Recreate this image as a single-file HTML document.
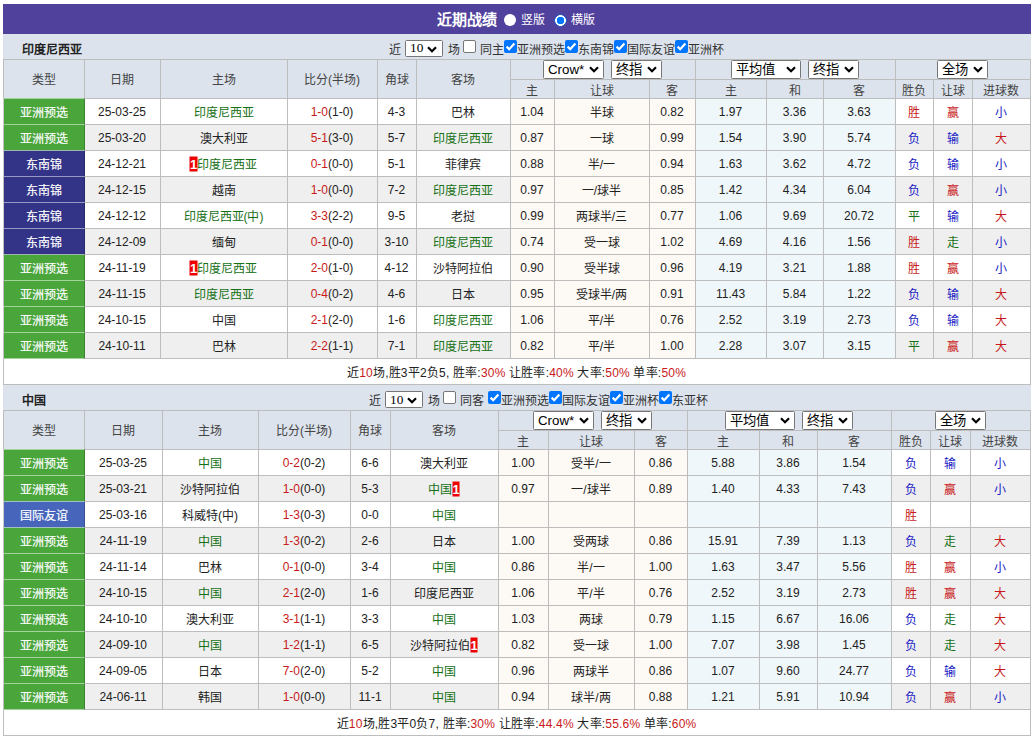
<!DOCTYPE html><html lang="zh-CN"><head><meta charset="utf-8"><style>
html,body{margin:0;padding:0;background:#fff;width:1032px;height:737px;overflow:hidden}
body{position:relative;font-family:"Liberation Sans",sans-serif;font-size:12px;color:#222}
.t{position:absolute;display:flex;align-items:center;justify-content:center;white-space:nowrap;font-size:12px;transform:translate(-0.5px,-0.5px)}
.tn{position:absolute;font-weight:bold;font-size:12px;color:#222;white-space:nowrap}
.tx{position:absolute;font-size:12px;color:#333;white-space:nowrap}
.sel{position:absolute;background:#fff;border:1px solid #767676;border-radius:1.5px;box-sizing:content-box}
.sl{position:absolute;left:4px;top:0;line-height:17px;font-size:13.3px;color:#000}
.sl2{position:absolute;left:4px;top:-1px;line-height:15px;font-size:13.3px;color:#000;font-family:"Liberation Serif",serif}
.bd{display:inline-block;background:#e00;color:#fff;font-weight:bold;font-size:13px;width:7.5px;height:15px;line-height:16px;text-align:center;overflow:hidden;vertical-align:-2px;margin-top:-5px;position:relative;top:0.5px}

</style></head><body>
<div style="position:absolute;left:3px;top:4px;width:1028px;height:30px;background:#50419c;"></div>
<div style="position:absolute;left:437px;top:4px;height:30px;line-height:31px;color:#fff;font-weight:bold;font-size:15px;white-space:nowrap">近期战绩</div>
<div style="position:absolute;left:504px;top:14px;width:12px;height:12px;border-radius:50%;background:#fff"></div>
<div style="position:absolute;left:521px;top:5px;height:30px;line-height:31px;color:#fff;font-size:12px;white-space:nowrap">竖版</div>
<div style="position:absolute;left:554px;top:14px;width:13px;height:13px;border-radius:50%;background:radial-gradient(circle at 50% 50%, #0075ff 0 3.5px, #f4ffff 4px 5.1px, #2d5ac8 5.6px 6.1px, rgba(45,90,200,0) 6.6px)"></div>
<div style="position:absolute;left:571px;top:5px;height:30px;line-height:31px;color:#fff;font-size:12px;white-space:nowrap">横版</div>
<div style="position:absolute;left:3px;top:34px;width:1028px;height:25px;background:#dce3ed;"></div>
<div class="tn" style="left:22px;top:38px;height:25px;line-height:25px">印度尼西亚</div>
<div style="position:absolute;left:3px;top:59px;width:1027px;height:39px;background:#dce3ed;"></div>
<div class="t" style="left:4px;top:59px;width:80px;height:39px;color:#444;"><span>类型</span></div>
<div class="t" style="left:85px;top:59px;width:75px;height:39px;color:#444;"><span>日期</span></div>
<div class="t" style="left:161px;top:59px;width:126px;height:39px;color:#444;"><span>主场</span></div>
<div class="t" style="left:288px;top:59px;width:89px;height:39px;color:#444;"><span>比分(半场)</span></div>
<div class="t" style="left:378px;top:59px;width:38px;height:39px;color:#444;"><span>角球</span></div>
<div class="t" style="left:417px;top:59px;width:93px;height:39px;color:#444;"><span>客场</span></div>
<div class="t" style="left:511px;top:80px;width:43px;height:18px;color:#444;"><span>主</span></div>
<div class="t" style="left:555px;top:80px;width:94px;height:18px;color:#444;"><span>让球</span></div>
<div class="t" style="left:650px;top:80px;width:45px;height:18px;color:#444;"><span>客</span></div>
<div class="t" style="left:696px;top:80px;width:70px;height:18px;color:#444;"><span>主</span></div>
<div class="t" style="left:767px;top:80px;width:56px;height:18px;color:#444;"><span>和</span></div>
<div class="t" style="left:824px;top:80px;width:71px;height:18px;color:#444;"><span>客</span></div>
<div class="t" style="left:896px;top:80px;width:37px;height:18px;color:#444;"><span>胜负</span></div>
<div class="t" style="left:934px;top:80px;width:38px;height:18px;color:#444;"><span>让球</span></div>
<div class="t" style="left:973px;top:80px;width:57px;height:18px;color:#444;"><span>进球数</span></div>
<div class="tx" style="left:389px;top:38px;height:25px;line-height:25px">近</div>
<div class="sel" style="left:405px;top:40px;width:36px;height:15px;"><span class="sl2" style="top:-1px">10</span><svg class="chev" width="10" height="7" viewBox="0 0 10 7" style="position:absolute;right:5px;top:5px"><path d="M1 1.2 L5 5.2 L9 1.2" fill="none" stroke="#000" stroke-width="2.2"/></svg></div>
<div class="tx" style="left:448px;top:38px;height:25px;line-height:25px">场</div>
<div style="position:absolute;left:463px;top:40px;width:11px;height:11px;background:#fff;border:1px solid #767676;border-radius:2px"></div>
<div class="tx" style="left:480px;top:38px;height:25px;line-height:25px">同主</div>
<div style="position:absolute;left:504px;top:40px;width:13px;height:13px;background:#0075ff;border-radius:2px"><svg width="13" height="13" viewBox="0 0 13 13" style="position:absolute;left:0;top:0"><path d="M2.6 6.6 L5.2 9.2 L10.4 3.6" fill="none" stroke="#fff" stroke-width="2.2"/></svg></div>
<div class="tx" style="left:517px;top:38px;height:25px;line-height:25px">亚洲预选</div>
<div style="position:absolute;left:565px;top:40px;width:13px;height:13px;background:#0075ff;border-radius:2px"><svg width="13" height="13" viewBox="0 0 13 13" style="position:absolute;left:0;top:0"><path d="M2.6 6.6 L5.2 9.2 L10.4 3.6" fill="none" stroke="#fff" stroke-width="2.2"/></svg></div>
<div class="tx" style="left:578px;top:38px;height:25px;line-height:25px">东南锦</div>
<div style="position:absolute;left:614px;top:40px;width:13px;height:13px;background:#0075ff;border-radius:2px"><svg width="13" height="13" viewBox="0 0 13 13" style="position:absolute;left:0;top:0"><path d="M2.6 6.6 L5.2 9.2 L10.4 3.6" fill="none" stroke="#fff" stroke-width="2.2"/></svg></div>
<div class="tx" style="left:627px;top:38px;height:25px;line-height:25px">国际友谊</div>
<div style="position:absolute;left:675px;top:40px;width:13px;height:13px;background:#0075ff;border-radius:2px"><svg width="13" height="13" viewBox="0 0 13 13" style="position:absolute;left:0;top:0"><path d="M2.6 6.6 L5.2 9.2 L10.4 3.6" fill="none" stroke="#fff" stroke-width="2.2"/></svg></div>
<div class="tx" style="left:688px;top:38px;height:25px;line-height:25px">亚洲杯</div>
<div class="sel" style="left:543px;top:60px;width:59px;height:17px;"><span class="sl">Crow*</span><svg class="chev" width="10" height="7" viewBox="0 0 10 7" style="position:absolute;right:4px;top:5px"><path d="M1 1.2 L5 5.2 L9 1.2" fill="none" stroke="#000" stroke-width="2.2"/></svg></div>
<div class="sel" style="left:611px;top:60px;width:49px;height:17px;"><span class="sl">终指</span><svg class="chev" width="10" height="7" viewBox="0 0 10 7" style="position:absolute;right:4px;top:5px"><path d="M1 1.2 L5 5.2 L9 1.2" fill="none" stroke="#000" stroke-width="2.2"/></svg></div>
<div class="sel" style="left:731px;top:60px;width:68px;height:17px;"><span class="sl">平均值</span><svg class="chev" width="10" height="7" viewBox="0 0 10 7" style="position:absolute;right:4px;top:5px"><path d="M1 1.2 L5 5.2 L9 1.2" fill="none" stroke="#000" stroke-width="2.2"/></svg></div>
<div class="sel" style="left:808px;top:60px;width:49px;height:17px;"><span class="sl">终指</span><svg class="chev" width="10" height="7" viewBox="0 0 10 7" style="position:absolute;right:4px;top:5px"><path d="M1 1.2 L5 5.2 L9 1.2" fill="none" stroke="#000" stroke-width="2.2"/></svg></div>
<div class="sel" style="left:937px;top:60px;width:49px;height:17px;"><span class="sl">全场</span><svg class="chev" width="10" height="7" viewBox="0 0 10 7" style="position:absolute;right:4px;top:5px"><path d="M1 1.2 L5 5.2 L9 1.2" fill="none" stroke="#000" stroke-width="2.2"/></svg></div>
<div style="position:absolute;left:3px;top:98px;width:1027px;height:26px;background:#ffffff;"></div>
<div style="position:absolute;left:511px;top:99px;width:185px;height:25px;background:#fdf9f5;"></div>
<div style="position:absolute;left:696px;top:99px;width:200px;height:25px;background:#eff7fa;"></div>
<div style="position:absolute;left:4px;top:99px;width:81px;height:25px;background:#4aa53b;"></div>
<div class="t" style="left:4px;top:99px;width:80px;height:25px;color:#fff;-webkit-text-stroke:0.15px #fff"><span>亚洲预选</span></div>
<div class="t" style="left:85px;top:99px;width:75px;height:25px;color:#222;"><span>25-03-25</span></div>
<div class="t" style="left:161px;top:99px;width:126px;height:25px;color:#222;"><span><span style="color:#167016">印度尼西亚</span></span></div>
<div class="t" style="left:288px;top:99px;width:89px;height:25px;color:#222;"><span><span style="color:#c81a1a">1-0</span>(1-0)</span></div>
<div class="t" style="left:378px;top:99px;width:38px;height:25px;color:#222;"><span>4-3</span></div>
<div class="t" style="left:417px;top:99px;width:93px;height:25px;color:#222;"><span>巴林</span></div>
<div class="t" style="left:511px;top:99px;width:43px;height:25px;color:#222;"><span>1.04</span></div>
<div class="t" style="left:555px;top:99px;width:94px;height:25px;color:#222;"><span>半球</span></div>
<div class="t" style="left:650px;top:99px;width:45px;height:25px;color:#222;"><span>0.82</span></div>
<div class="t" style="left:696px;top:99px;width:70px;height:25px;color:#222;"><span>1.97</span></div>
<div class="t" style="left:767px;top:99px;width:56px;height:25px;color:#222;"><span>3.36</span></div>
<div class="t" style="left:824px;top:99px;width:71px;height:25px;color:#222;"><span>3.63</span></div>
<div class="t" style="left:896px;top:99px;width:37px;height:25px;color:#c81a1a;"><span>胜</span></div>
<div class="t" style="left:934px;top:99px;width:38px;height:25px;color:#c81a1a;"><span>赢</span></div>
<div class="t" style="left:973px;top:99px;width:57px;height:25px;color:#1a1ac4;"><span>小</span></div>
<div style="position:absolute;left:3px;top:124px;width:1027px;height:26px;background:#efefef;"></div>
<div style="position:absolute;left:511px;top:125px;width:185px;height:25px;background:#fdf9f5;"></div>
<div style="position:absolute;left:696px;top:125px;width:200px;height:25px;background:#eff7fa;"></div>
<div style="position:absolute;left:4px;top:125px;width:81px;height:25px;background:#4aa53b;"></div>
<div class="t" style="left:4px;top:125px;width:80px;height:25px;color:#fff;-webkit-text-stroke:0.15px #fff"><span>亚洲预选</span></div>
<div class="t" style="left:85px;top:125px;width:75px;height:25px;color:#222;"><span>25-03-20</span></div>
<div class="t" style="left:161px;top:125px;width:126px;height:25px;color:#222;"><span>澳大利亚</span></div>
<div class="t" style="left:288px;top:125px;width:89px;height:25px;color:#222;"><span><span style="color:#c81a1a">5-1</span>(3-0)</span></div>
<div class="t" style="left:378px;top:125px;width:38px;height:25px;color:#222;"><span>5-7</span></div>
<div class="t" style="left:417px;top:125px;width:93px;height:25px;color:#222;"><span><span style="color:#167016">印度尼西亚</span></span></div>
<div class="t" style="left:511px;top:125px;width:43px;height:25px;color:#222;"><span>0.87</span></div>
<div class="t" style="left:555px;top:125px;width:94px;height:25px;color:#222;"><span>一球</span></div>
<div class="t" style="left:650px;top:125px;width:45px;height:25px;color:#222;"><span>0.99</span></div>
<div class="t" style="left:696px;top:125px;width:70px;height:25px;color:#222;"><span>1.54</span></div>
<div class="t" style="left:767px;top:125px;width:56px;height:25px;color:#222;"><span>3.90</span></div>
<div class="t" style="left:824px;top:125px;width:71px;height:25px;color:#222;"><span>5.74</span></div>
<div class="t" style="left:896px;top:125px;width:37px;height:25px;color:#1a1ac4;"><span>负</span></div>
<div class="t" style="left:934px;top:125px;width:38px;height:25px;color:#1a1ac4;"><span>输</span></div>
<div class="t" style="left:973px;top:125px;width:57px;height:25px;color:#c81a1a;"><span>大</span></div>
<div style="position:absolute;left:3px;top:150px;width:1027px;height:26px;background:#ffffff;"></div>
<div style="position:absolute;left:511px;top:151px;width:185px;height:25px;background:#fdf9f5;"></div>
<div style="position:absolute;left:696px;top:151px;width:200px;height:25px;background:#eff7fa;"></div>
<div style="position:absolute;left:4px;top:151px;width:81px;height:25px;background:#333388;"></div>
<div class="t" style="left:4px;top:151px;width:80px;height:25px;color:#fff;-webkit-text-stroke:0.15px #fff"><span>东南锦</span></div>
<div class="t" style="left:85px;top:151px;width:75px;height:25px;color:#222;"><span>24-12-21</span></div>
<div class="t" style="left:161px;top:151px;width:126px;height:25px;color:#222;"><span><span class="bd">1</span><span style="color:#167016">印度尼西亚</span></span></div>
<div class="t" style="left:288px;top:151px;width:89px;height:25px;color:#222;"><span><span style="color:#c81a1a">0-1</span>(0-0)</span></div>
<div class="t" style="left:378px;top:151px;width:38px;height:25px;color:#222;"><span>5-1</span></div>
<div class="t" style="left:417px;top:151px;width:93px;height:25px;color:#222;"><span>菲律宾</span></div>
<div class="t" style="left:511px;top:151px;width:43px;height:25px;color:#222;"><span>0.88</span></div>
<div class="t" style="left:555px;top:151px;width:94px;height:25px;color:#222;"><span>半/一</span></div>
<div class="t" style="left:650px;top:151px;width:45px;height:25px;color:#222;"><span>0.94</span></div>
<div class="t" style="left:696px;top:151px;width:70px;height:25px;color:#222;"><span>1.63</span></div>
<div class="t" style="left:767px;top:151px;width:56px;height:25px;color:#222;"><span>3.62</span></div>
<div class="t" style="left:824px;top:151px;width:71px;height:25px;color:#222;"><span>4.72</span></div>
<div class="t" style="left:896px;top:151px;width:37px;height:25px;color:#1a1ac4;"><span>负</span></div>
<div class="t" style="left:934px;top:151px;width:38px;height:25px;color:#1a1ac4;"><span>输</span></div>
<div class="t" style="left:973px;top:151px;width:57px;height:25px;color:#1a1ac4;"><span>小</span></div>
<div style="position:absolute;left:3px;top:176px;width:1027px;height:26px;background:#efefef;"></div>
<div style="position:absolute;left:511px;top:177px;width:185px;height:25px;background:#fdf9f5;"></div>
<div style="position:absolute;left:696px;top:177px;width:200px;height:25px;background:#eff7fa;"></div>
<div style="position:absolute;left:4px;top:177px;width:81px;height:25px;background:#333388;"></div>
<div class="t" style="left:4px;top:177px;width:80px;height:25px;color:#fff;-webkit-text-stroke:0.15px #fff"><span>东南锦</span></div>
<div class="t" style="left:85px;top:177px;width:75px;height:25px;color:#222;"><span>24-12-15</span></div>
<div class="t" style="left:161px;top:177px;width:126px;height:25px;color:#222;"><span>越南</span></div>
<div class="t" style="left:288px;top:177px;width:89px;height:25px;color:#222;"><span><span style="color:#c81a1a">1-0</span>(0-0)</span></div>
<div class="t" style="left:378px;top:177px;width:38px;height:25px;color:#222;"><span>7-2</span></div>
<div class="t" style="left:417px;top:177px;width:93px;height:25px;color:#222;"><span><span style="color:#167016">印度尼西亚</span></span></div>
<div class="t" style="left:511px;top:177px;width:43px;height:25px;color:#222;"><span>0.97</span></div>
<div class="t" style="left:555px;top:177px;width:94px;height:25px;color:#222;"><span>一/球半</span></div>
<div class="t" style="left:650px;top:177px;width:45px;height:25px;color:#222;"><span>0.85</span></div>
<div class="t" style="left:696px;top:177px;width:70px;height:25px;color:#222;"><span>1.42</span></div>
<div class="t" style="left:767px;top:177px;width:56px;height:25px;color:#222;"><span>4.34</span></div>
<div class="t" style="left:824px;top:177px;width:71px;height:25px;color:#222;"><span>6.04</span></div>
<div class="t" style="left:896px;top:177px;width:37px;height:25px;color:#1a1ac4;"><span>负</span></div>
<div class="t" style="left:934px;top:177px;width:38px;height:25px;color:#c81a1a;"><span>赢</span></div>
<div class="t" style="left:973px;top:177px;width:57px;height:25px;color:#1a1ac4;"><span>小</span></div>
<div style="position:absolute;left:3px;top:202px;width:1027px;height:26px;background:#ffffff;"></div>
<div style="position:absolute;left:511px;top:203px;width:185px;height:25px;background:#fdf9f5;"></div>
<div style="position:absolute;left:696px;top:203px;width:200px;height:25px;background:#eff7fa;"></div>
<div style="position:absolute;left:4px;top:203px;width:81px;height:25px;background:#333388;"></div>
<div class="t" style="left:4px;top:203px;width:80px;height:25px;color:#fff;-webkit-text-stroke:0.15px #fff"><span>东南锦</span></div>
<div class="t" style="left:85px;top:203px;width:75px;height:25px;color:#222;"><span>24-12-12</span></div>
<div class="t" style="left:161px;top:203px;width:126px;height:25px;color:#222;"><span><span style="color:#167016">印度尼西亚(中)</span></span></div>
<div class="t" style="left:288px;top:203px;width:89px;height:25px;color:#222;"><span><span style="color:#c81a1a">3-3</span>(2-2)</span></div>
<div class="t" style="left:378px;top:203px;width:38px;height:25px;color:#222;"><span>9-5</span></div>
<div class="t" style="left:417px;top:203px;width:93px;height:25px;color:#222;"><span>老挝</span></div>
<div class="t" style="left:511px;top:203px;width:43px;height:25px;color:#222;"><span>0.99</span></div>
<div class="t" style="left:555px;top:203px;width:94px;height:25px;color:#222;"><span>两球半/三</span></div>
<div class="t" style="left:650px;top:203px;width:45px;height:25px;color:#222;"><span>0.77</span></div>
<div class="t" style="left:696px;top:203px;width:70px;height:25px;color:#222;"><span>1.06</span></div>
<div class="t" style="left:767px;top:203px;width:56px;height:25px;color:#222;"><span>9.69</span></div>
<div class="t" style="left:824px;top:203px;width:71px;height:25px;color:#222;"><span>20.72</span></div>
<div class="t" style="left:896px;top:203px;width:37px;height:25px;color:#167016;"><span>平</span></div>
<div class="t" style="left:934px;top:203px;width:38px;height:25px;color:#1a1ac4;"><span>输</span></div>
<div class="t" style="left:973px;top:203px;width:57px;height:25px;color:#c81a1a;"><span>大</span></div>
<div style="position:absolute;left:3px;top:228px;width:1027px;height:26px;background:#efefef;"></div>
<div style="position:absolute;left:511px;top:229px;width:185px;height:25px;background:#fdf9f5;"></div>
<div style="position:absolute;left:696px;top:229px;width:200px;height:25px;background:#eff7fa;"></div>
<div style="position:absolute;left:4px;top:229px;width:81px;height:25px;background:#333388;"></div>
<div class="t" style="left:4px;top:229px;width:80px;height:25px;color:#fff;-webkit-text-stroke:0.15px #fff"><span>东南锦</span></div>
<div class="t" style="left:85px;top:229px;width:75px;height:25px;color:#222;"><span>24-12-09</span></div>
<div class="t" style="left:161px;top:229px;width:126px;height:25px;color:#222;"><span>缅甸</span></div>
<div class="t" style="left:288px;top:229px;width:89px;height:25px;color:#222;"><span><span style="color:#c81a1a">0-1</span>(0-0)</span></div>
<div class="t" style="left:378px;top:229px;width:38px;height:25px;color:#222;"><span>3-10</span></div>
<div class="t" style="left:417px;top:229px;width:93px;height:25px;color:#222;"><span><span style="color:#167016">印度尼西亚</span></span></div>
<div class="t" style="left:511px;top:229px;width:43px;height:25px;color:#222;"><span>0.74</span></div>
<div class="t" style="left:555px;top:229px;width:94px;height:25px;color:#222;"><span>受一球</span></div>
<div class="t" style="left:650px;top:229px;width:45px;height:25px;color:#222;"><span>1.02</span></div>
<div class="t" style="left:696px;top:229px;width:70px;height:25px;color:#222;"><span>4.69</span></div>
<div class="t" style="left:767px;top:229px;width:56px;height:25px;color:#222;"><span>4.16</span></div>
<div class="t" style="left:824px;top:229px;width:71px;height:25px;color:#222;"><span>1.56</span></div>
<div class="t" style="left:896px;top:229px;width:37px;height:25px;color:#c81a1a;"><span>胜</span></div>
<div class="t" style="left:934px;top:229px;width:38px;height:25px;color:#167016;"><span>走</span></div>
<div class="t" style="left:973px;top:229px;width:57px;height:25px;color:#1a1ac4;"><span>小</span></div>
<div style="position:absolute;left:3px;top:254px;width:1027px;height:26px;background:#ffffff;"></div>
<div style="position:absolute;left:511px;top:255px;width:185px;height:25px;background:#fdf9f5;"></div>
<div style="position:absolute;left:696px;top:255px;width:200px;height:25px;background:#eff7fa;"></div>
<div style="position:absolute;left:4px;top:255px;width:81px;height:25px;background:#4aa53b;"></div>
<div class="t" style="left:4px;top:255px;width:80px;height:25px;color:#fff;-webkit-text-stroke:0.15px #fff"><span>亚洲预选</span></div>
<div class="t" style="left:85px;top:255px;width:75px;height:25px;color:#222;"><span>24-11-19</span></div>
<div class="t" style="left:161px;top:255px;width:126px;height:25px;color:#222;"><span><span class="bd">1</span><span style="color:#167016">印度尼西亚</span></span></div>
<div class="t" style="left:288px;top:255px;width:89px;height:25px;color:#222;"><span><span style="color:#c81a1a">2-0</span>(1-0)</span></div>
<div class="t" style="left:378px;top:255px;width:38px;height:25px;color:#222;"><span>4-12</span></div>
<div class="t" style="left:417px;top:255px;width:93px;height:25px;color:#222;"><span>沙特阿拉伯</span></div>
<div class="t" style="left:511px;top:255px;width:43px;height:25px;color:#222;"><span>0.90</span></div>
<div class="t" style="left:555px;top:255px;width:94px;height:25px;color:#222;"><span>受半球</span></div>
<div class="t" style="left:650px;top:255px;width:45px;height:25px;color:#222;"><span>0.96</span></div>
<div class="t" style="left:696px;top:255px;width:70px;height:25px;color:#222;"><span>4.19</span></div>
<div class="t" style="left:767px;top:255px;width:56px;height:25px;color:#222;"><span>3.21</span></div>
<div class="t" style="left:824px;top:255px;width:71px;height:25px;color:#222;"><span>1.88</span></div>
<div class="t" style="left:896px;top:255px;width:37px;height:25px;color:#c81a1a;"><span>胜</span></div>
<div class="t" style="left:934px;top:255px;width:38px;height:25px;color:#c81a1a;"><span>赢</span></div>
<div class="t" style="left:973px;top:255px;width:57px;height:25px;color:#1a1ac4;"><span>小</span></div>
<div style="position:absolute;left:3px;top:280px;width:1027px;height:26px;background:#efefef;"></div>
<div style="position:absolute;left:511px;top:281px;width:185px;height:25px;background:#fdf9f5;"></div>
<div style="position:absolute;left:696px;top:281px;width:200px;height:25px;background:#eff7fa;"></div>
<div style="position:absolute;left:4px;top:281px;width:81px;height:25px;background:#4aa53b;"></div>
<div class="t" style="left:4px;top:281px;width:80px;height:25px;color:#fff;-webkit-text-stroke:0.15px #fff"><span>亚洲预选</span></div>
<div class="t" style="left:85px;top:281px;width:75px;height:25px;color:#222;"><span>24-11-15</span></div>
<div class="t" style="left:161px;top:281px;width:126px;height:25px;color:#222;"><span><span style="color:#167016">印度尼西亚</span></span></div>
<div class="t" style="left:288px;top:281px;width:89px;height:25px;color:#222;"><span><span style="color:#c81a1a">0-4</span>(0-2)</span></div>
<div class="t" style="left:378px;top:281px;width:38px;height:25px;color:#222;"><span>4-6</span></div>
<div class="t" style="left:417px;top:281px;width:93px;height:25px;color:#222;"><span>日本</span></div>
<div class="t" style="left:511px;top:281px;width:43px;height:25px;color:#222;"><span>0.95</span></div>
<div class="t" style="left:555px;top:281px;width:94px;height:25px;color:#222;"><span>受球半/两</span></div>
<div class="t" style="left:650px;top:281px;width:45px;height:25px;color:#222;"><span>0.91</span></div>
<div class="t" style="left:696px;top:281px;width:70px;height:25px;color:#222;"><span>11.43</span></div>
<div class="t" style="left:767px;top:281px;width:56px;height:25px;color:#222;"><span>5.84</span></div>
<div class="t" style="left:824px;top:281px;width:71px;height:25px;color:#222;"><span>1.22</span></div>
<div class="t" style="left:896px;top:281px;width:37px;height:25px;color:#1a1ac4;"><span>负</span></div>
<div class="t" style="left:934px;top:281px;width:38px;height:25px;color:#1a1ac4;"><span>输</span></div>
<div class="t" style="left:973px;top:281px;width:57px;height:25px;color:#c81a1a;"><span>大</span></div>
<div style="position:absolute;left:3px;top:306px;width:1027px;height:26px;background:#ffffff;"></div>
<div style="position:absolute;left:511px;top:307px;width:185px;height:25px;background:#fdf9f5;"></div>
<div style="position:absolute;left:696px;top:307px;width:200px;height:25px;background:#eff7fa;"></div>
<div style="position:absolute;left:4px;top:307px;width:81px;height:25px;background:#4aa53b;"></div>
<div class="t" style="left:4px;top:307px;width:80px;height:25px;color:#fff;-webkit-text-stroke:0.15px #fff"><span>亚洲预选</span></div>
<div class="t" style="left:85px;top:307px;width:75px;height:25px;color:#222;"><span>24-10-15</span></div>
<div class="t" style="left:161px;top:307px;width:126px;height:25px;color:#222;"><span>中国</span></div>
<div class="t" style="left:288px;top:307px;width:89px;height:25px;color:#222;"><span><span style="color:#c81a1a">2-1</span>(2-0)</span></div>
<div class="t" style="left:378px;top:307px;width:38px;height:25px;color:#222;"><span>1-6</span></div>
<div class="t" style="left:417px;top:307px;width:93px;height:25px;color:#222;"><span><span style="color:#167016">印度尼西亚</span></span></div>
<div class="t" style="left:511px;top:307px;width:43px;height:25px;color:#222;"><span>1.06</span></div>
<div class="t" style="left:555px;top:307px;width:94px;height:25px;color:#222;"><span>平/半</span></div>
<div class="t" style="left:650px;top:307px;width:45px;height:25px;color:#222;"><span>0.76</span></div>
<div class="t" style="left:696px;top:307px;width:70px;height:25px;color:#222;"><span>2.52</span></div>
<div class="t" style="left:767px;top:307px;width:56px;height:25px;color:#222;"><span>3.19</span></div>
<div class="t" style="left:824px;top:307px;width:71px;height:25px;color:#222;"><span>2.73</span></div>
<div class="t" style="left:896px;top:307px;width:37px;height:25px;color:#1a1ac4;"><span>负</span></div>
<div class="t" style="left:934px;top:307px;width:38px;height:25px;color:#1a1ac4;"><span>输</span></div>
<div class="t" style="left:973px;top:307px;width:57px;height:25px;color:#c81a1a;"><span>大</span></div>
<div style="position:absolute;left:3px;top:332px;width:1027px;height:26px;background:#efefef;"></div>
<div style="position:absolute;left:511px;top:333px;width:185px;height:25px;background:#fdf9f5;"></div>
<div style="position:absolute;left:696px;top:333px;width:200px;height:25px;background:#eff7fa;"></div>
<div style="position:absolute;left:4px;top:333px;width:81px;height:25px;background:#4aa53b;"></div>
<div class="t" style="left:4px;top:333px;width:80px;height:25px;color:#fff;-webkit-text-stroke:0.15px #fff"><span>亚洲预选</span></div>
<div class="t" style="left:85px;top:333px;width:75px;height:25px;color:#222;"><span>24-10-11</span></div>
<div class="t" style="left:161px;top:333px;width:126px;height:25px;color:#222;"><span>巴林</span></div>
<div class="t" style="left:288px;top:333px;width:89px;height:25px;color:#222;"><span><span style="color:#c81a1a">2-2</span>(1-1)</span></div>
<div class="t" style="left:378px;top:333px;width:38px;height:25px;color:#222;"><span>7-1</span></div>
<div class="t" style="left:417px;top:333px;width:93px;height:25px;color:#222;"><span><span style="color:#167016">印度尼西亚</span></span></div>
<div class="t" style="left:511px;top:333px;width:43px;height:25px;color:#222;"><span>0.82</span></div>
<div class="t" style="left:555px;top:333px;width:94px;height:25px;color:#222;"><span>平/半</span></div>
<div class="t" style="left:650px;top:333px;width:45px;height:25px;color:#222;"><span>1.00</span></div>
<div class="t" style="left:696px;top:333px;width:70px;height:25px;color:#222;"><span>2.28</span></div>
<div class="t" style="left:767px;top:333px;width:56px;height:25px;color:#222;"><span>3.07</span></div>
<div class="t" style="left:824px;top:333px;width:71px;height:25px;color:#222;"><span>3.15</span></div>
<div class="t" style="left:896px;top:333px;width:37px;height:25px;color:#167016;"><span>平</span></div>
<div class="t" style="left:934px;top:333px;width:38px;height:25px;color:#c81a1a;"><span>赢</span></div>
<div class="t" style="left:973px;top:333px;width:57px;height:25px;color:#c81a1a;"><span>大</span></div>
<div style="position:absolute;left:3px;top:358px;width:1027px;height:26px;background:#fff;"></div>
<div class="t" style="left:4px;top:359px;width:1026px;height:25px;color:#222;letter-spacing:0.2px"><span>近<span style="color:#c81a1a">10</span>场,胜3平2负5, 胜率:<span style="color:#c81a1a">30%</span> 让胜率:<span style="color:#c81a1a">40%</span> 大率:<span style="color:#c81a1a">50%</span> 单率:<span style="color:#c81a1a">50%</span></span></div>
<div style="position:absolute;left:3px;top:59px;width:1028px;height:1px;background:#bdbdbd;"></div>
<div style="position:absolute;left:510px;top:79px;width:521px;height:1px;background:#bdbdbd;"></div>
<div style="position:absolute;left:84px;top:98px;width:947px;height:1px;background:#bdbdbd;"></div>
<div style="position:absolute;left:4px;top:98px;width:80px;height:1px;background:#a4d29d;"></div>
<div style="position:absolute;left:84px;top:124px;width:947px;height:1px;background:#bdbdbd;"></div>
<div style="position:absolute;left:4px;top:124px;width:80px;height:1px;background:#a4d29d;"></div>
<div style="position:absolute;left:84px;top:150px;width:947px;height:1px;background:#bdbdbd;"></div>
<div style="position:absolute;left:4px;top:150px;width:80px;height:1px;background:#9eb6b0;"></div>
<div style="position:absolute;left:84px;top:176px;width:947px;height:1px;background:#bdbdbd;"></div>
<div style="position:absolute;left:4px;top:176px;width:80px;height:1px;background:#9999c4;"></div>
<div style="position:absolute;left:84px;top:202px;width:947px;height:1px;background:#bdbdbd;"></div>
<div style="position:absolute;left:4px;top:202px;width:80px;height:1px;background:#9999c4;"></div>
<div style="position:absolute;left:84px;top:228px;width:947px;height:1px;background:#bdbdbd;"></div>
<div style="position:absolute;left:4px;top:228px;width:80px;height:1px;background:#9999c4;"></div>
<div style="position:absolute;left:84px;top:254px;width:947px;height:1px;background:#bdbdbd;"></div>
<div style="position:absolute;left:4px;top:254px;width:80px;height:1px;background:#9eb6b0;"></div>
<div style="position:absolute;left:84px;top:280px;width:947px;height:1px;background:#bdbdbd;"></div>
<div style="position:absolute;left:4px;top:280px;width:80px;height:1px;background:#a4d29d;"></div>
<div style="position:absolute;left:84px;top:306px;width:947px;height:1px;background:#bdbdbd;"></div>
<div style="position:absolute;left:4px;top:306px;width:80px;height:1px;background:#a4d29d;"></div>
<div style="position:absolute;left:84px;top:332px;width:947px;height:1px;background:#bdbdbd;"></div>
<div style="position:absolute;left:4px;top:332px;width:80px;height:1px;background:#a4d29d;"></div>
<div style="position:absolute;left:84px;top:358px;width:947px;height:1px;background:#bdbdbd;"></div>
<div style="position:absolute;left:4px;top:358px;width:80px;height:1px;background:#a4d29d;"></div>
<div style="position:absolute;left:3px;top:384px;width:1028px;height:1px;background:#bdbdbd;"></div>
<div style="position:absolute;left:3px;top:59px;width:1px;height:39px;background:#bdbdbd;"></div>
<div style="position:absolute;left:3px;top:98px;width:1px;height:261px;background:rgba(0,0,0,0.2);"></div>
<div style="position:absolute;left:3px;top:359px;width:1px;height:26px;background:#bdbdbd;"></div>
<div style="position:absolute;left:84px;top:59px;width:1px;height:39px;background:#bdbdbd;"></div>
<div style="position:absolute;left:84px;top:98px;width:1px;height:261px;background:rgba(0,0,0,0.2);"></div>
<div style="position:absolute;left:1030px;top:59px;width:1px;height:326px;background:#bdbdbd;"></div>
<div style="position:absolute;left:160px;top:59px;width:1px;height:300px;background:#bdbdbd;"></div>
<div style="position:absolute;left:287px;top:59px;width:1px;height:300px;background:#bdbdbd;"></div>
<div style="position:absolute;left:377px;top:59px;width:1px;height:300px;background:#bdbdbd;"></div>
<div style="position:absolute;left:416px;top:59px;width:1px;height:300px;background:#bdbdbd;"></div>
<div style="position:absolute;left:510px;top:59px;width:1px;height:300px;background:#bdbdbd;"></div>
<div style="position:absolute;left:554px;top:79px;width:1px;height:280px;background:#bdbdbd;"></div>
<div style="position:absolute;left:649px;top:79px;width:1px;height:280px;background:#bdbdbd;"></div>
<div style="position:absolute;left:695px;top:59px;width:1px;height:300px;background:#bdbdbd;"></div>
<div style="position:absolute;left:766px;top:79px;width:1px;height:280px;background:#bdbdbd;"></div>
<div style="position:absolute;left:823px;top:79px;width:1px;height:280px;background:#bdbdbd;"></div>
<div style="position:absolute;left:895px;top:59px;width:1px;height:300px;background:#bdbdbd;"></div>
<div style="position:absolute;left:933px;top:79px;width:1px;height:280px;background:#bdbdbd;"></div>
<div style="position:absolute;left:972px;top:79px;width:1px;height:280px;background:#bdbdbd;"></div>
<div style="position:absolute;left:3px;top:385px;width:1028px;height:25px;background:#dce3ed;"></div>
<div class="tn" style="left:22px;top:388px;height:26px;line-height:26px">中国</div>
<div style="position:absolute;left:3px;top:410px;width:1027px;height:39px;background:#dce3ed;"></div>
<div class="t" style="left:4px;top:410px;width:80px;height:39px;color:#444;"><span>类型</span></div>
<div class="t" style="left:85px;top:410px;width:77px;height:39px;color:#444;"><span>日期</span></div>
<div class="t" style="left:163px;top:410px;width:95px;height:39px;color:#444;"><span>主场</span></div>
<div class="t" style="left:259px;top:410px;width:91px;height:39px;color:#444;"><span>比分(半场)</span></div>
<div class="t" style="left:351px;top:410px;width:39px;height:39px;color:#444;"><span>角球</span></div>
<div class="t" style="left:391px;top:410px;width:107px;height:39px;color:#444;"><span>客场</span></div>
<div class="t" style="left:499px;top:431px;width:49px;height:18px;color:#444;"><span>主</span></div>
<div class="t" style="left:549px;top:431px;width:85px;height:18px;color:#444;"><span>让球</span></div>
<div class="t" style="left:635px;top:431px;width:52px;height:18px;color:#444;"><span>客</span></div>
<div class="t" style="left:688px;top:431px;width:71px;height:18px;color:#444;"><span>主</span></div>
<div class="t" style="left:760px;top:431px;width:57px;height:18px;color:#444;"><span>和</span></div>
<div class="t" style="left:818px;top:431px;width:73px;height:18px;color:#444;"><span>客</span></div>
<div class="t" style="left:892px;top:431px;width:38px;height:18px;color:#444;"><span>胜负</span></div>
<div class="t" style="left:931px;top:431px;width:39px;height:18px;color:#444;"><span>让球</span></div>
<div class="t" style="left:971px;top:431px;width:59px;height:18px;color:#444;"><span>进球数</span></div>
<div class="tx" style="left:369px;top:388px;height:26px;line-height:26px">近</div>
<div class="sel" style="left:385px;top:391px;width:36px;height:15px;"><span class="sl2" style="top:0px">10</span><svg class="chev" width="10" height="7" viewBox="0 0 10 7" style="position:absolute;right:5px;top:5px"><path d="M1 1.2 L5 5.2 L9 1.2" fill="none" stroke="#000" stroke-width="2.2"/></svg></div>
<div class="tx" style="left:428px;top:388px;height:26px;line-height:26px">场</div>
<div style="position:absolute;left:443px;top:391px;width:11px;height:11px;background:#fff;border:1px solid #767676;border-radius:2px"></div>
<div class="tx" style="left:460px;top:388px;height:26px;line-height:26px">同客</div>
<div style="position:absolute;left:488px;top:391px;width:13px;height:13px;background:#0075ff;border-radius:2px"><svg width="13" height="13" viewBox="0 0 13 13" style="position:absolute;left:0;top:0"><path d="M2.6 6.6 L5.2 9.2 L10.4 3.6" fill="none" stroke="#fff" stroke-width="2.2"/></svg></div>
<div class="tx" style="left:501px;top:388px;height:26px;line-height:26px">亚洲预选</div>
<div style="position:absolute;left:549px;top:391px;width:13px;height:13px;background:#0075ff;border-radius:2px"><svg width="13" height="13" viewBox="0 0 13 13" style="position:absolute;left:0;top:0"><path d="M2.6 6.6 L5.2 9.2 L10.4 3.6" fill="none" stroke="#fff" stroke-width="2.2"/></svg></div>
<div class="tx" style="left:562px;top:388px;height:26px;line-height:26px">国际友谊</div>
<div style="position:absolute;left:610px;top:391px;width:13px;height:13px;background:#0075ff;border-radius:2px"><svg width="13" height="13" viewBox="0 0 13 13" style="position:absolute;left:0;top:0"><path d="M2.6 6.6 L5.2 9.2 L10.4 3.6" fill="none" stroke="#fff" stroke-width="2.2"/></svg></div>
<div class="tx" style="left:623px;top:388px;height:26px;line-height:26px">亚洲杯</div>
<div style="position:absolute;left:659px;top:391px;width:13px;height:13px;background:#0075ff;border-radius:2px"><svg width="13" height="13" viewBox="0 0 13 13" style="position:absolute;left:0;top:0"><path d="M2.6 6.6 L5.2 9.2 L10.4 3.6" fill="none" stroke="#fff" stroke-width="2.2"/></svg></div>
<div class="tx" style="left:672px;top:388px;height:26px;line-height:26px">东亚杯</div>
<div class="sel" style="left:533px;top:411px;width:59px;height:17px;"><span class="sl">Crow*</span><svg class="chev" width="10" height="7" viewBox="0 0 10 7" style="position:absolute;right:4px;top:5px"><path d="M1 1.2 L5 5.2 L9 1.2" fill="none" stroke="#000" stroke-width="2.2"/></svg></div>
<div class="sel" style="left:601px;top:411px;width:49px;height:17px;"><span class="sl">终指</span><svg class="chev" width="10" height="7" viewBox="0 0 10 7" style="position:absolute;right:4px;top:5px"><path d="M1 1.2 L5 5.2 L9 1.2" fill="none" stroke="#000" stroke-width="2.2"/></svg></div>
<div class="sel" style="left:725px;top:411px;width:68px;height:17px;"><span class="sl">平均值</span><svg class="chev" width="10" height="7" viewBox="0 0 10 7" style="position:absolute;right:4px;top:5px"><path d="M1 1.2 L5 5.2 L9 1.2" fill="none" stroke="#000" stroke-width="2.2"/></svg></div>
<div class="sel" style="left:802px;top:411px;width:49px;height:17px;"><span class="sl">终指</span><svg class="chev" width="10" height="7" viewBox="0 0 10 7" style="position:absolute;right:4px;top:5px"><path d="M1 1.2 L5 5.2 L9 1.2" fill="none" stroke="#000" stroke-width="2.2"/></svg></div>
<div class="sel" style="left:935px;top:411px;width:49px;height:17px;"><span class="sl">全场</span><svg class="chev" width="10" height="7" viewBox="0 0 10 7" style="position:absolute;right:4px;top:5px"><path d="M1 1.2 L5 5.2 L9 1.2" fill="none" stroke="#000" stroke-width="2.2"/></svg></div>
<div style="position:absolute;left:3px;top:449px;width:1027px;height:26px;background:#ffffff;"></div>
<div style="position:absolute;left:499px;top:450px;width:189px;height:25px;background:#fdf9f5;"></div>
<div style="position:absolute;left:688px;top:450px;width:204px;height:25px;background:#eff7fa;"></div>
<div style="position:absolute;left:4px;top:450px;width:81px;height:25px;background:#4aa53b;"></div>
<div class="t" style="left:4px;top:450px;width:80px;height:25px;color:#fff;-webkit-text-stroke:0.15px #fff"><span>亚洲预选</span></div>
<div class="t" style="left:85px;top:450px;width:77px;height:25px;color:#222;"><span>25-03-25</span></div>
<div class="t" style="left:163px;top:450px;width:95px;height:25px;color:#222;"><span><span style="color:#167016">中国</span></span></div>
<div class="t" style="left:259px;top:450px;width:91px;height:25px;color:#222;"><span><span style="color:#c81a1a">0-2</span>(0-2)</span></div>
<div class="t" style="left:351px;top:450px;width:39px;height:25px;color:#222;"><span>6-6</span></div>
<div class="t" style="left:391px;top:450px;width:107px;height:25px;color:#222;"><span>澳大利亚</span></div>
<div class="t" style="left:499px;top:450px;width:49px;height:25px;color:#222;"><span>1.00</span></div>
<div class="t" style="left:549px;top:450px;width:85px;height:25px;color:#222;"><span>受半/一</span></div>
<div class="t" style="left:635px;top:450px;width:52px;height:25px;color:#222;"><span>0.86</span></div>
<div class="t" style="left:688px;top:450px;width:71px;height:25px;color:#222;"><span>5.88</span></div>
<div class="t" style="left:760px;top:450px;width:57px;height:25px;color:#222;"><span>3.86</span></div>
<div class="t" style="left:818px;top:450px;width:73px;height:25px;color:#222;"><span>1.54</span></div>
<div class="t" style="left:892px;top:450px;width:38px;height:25px;color:#1a1ac4;"><span>负</span></div>
<div class="t" style="left:931px;top:450px;width:39px;height:25px;color:#1a1ac4;"><span>输</span></div>
<div class="t" style="left:971px;top:450px;width:59px;height:25px;color:#1a1ac4;"><span>小</span></div>
<div style="position:absolute;left:3px;top:475px;width:1027px;height:26px;background:#efefef;"></div>
<div style="position:absolute;left:499px;top:476px;width:189px;height:25px;background:#fdf9f5;"></div>
<div style="position:absolute;left:688px;top:476px;width:204px;height:25px;background:#eff7fa;"></div>
<div style="position:absolute;left:4px;top:476px;width:81px;height:25px;background:#4aa53b;"></div>
<div class="t" style="left:4px;top:476px;width:80px;height:25px;color:#fff;-webkit-text-stroke:0.15px #fff"><span>亚洲预选</span></div>
<div class="t" style="left:85px;top:476px;width:77px;height:25px;color:#222;"><span>25-03-21</span></div>
<div class="t" style="left:163px;top:476px;width:95px;height:25px;color:#222;"><span>沙特阿拉伯</span></div>
<div class="t" style="left:259px;top:476px;width:91px;height:25px;color:#222;"><span><span style="color:#c81a1a">1-0</span>(0-0)</span></div>
<div class="t" style="left:351px;top:476px;width:39px;height:25px;color:#222;"><span>5-3</span></div>
<div class="t" style="left:391px;top:476px;width:107px;height:25px;color:#222;"><span><span style="color:#167016">中国</span><span class="bd">1</span></span></div>
<div class="t" style="left:499px;top:476px;width:49px;height:25px;color:#222;"><span>0.97</span></div>
<div class="t" style="left:549px;top:476px;width:85px;height:25px;color:#222;"><span>一/球半</span></div>
<div class="t" style="left:635px;top:476px;width:52px;height:25px;color:#222;"><span>0.89</span></div>
<div class="t" style="left:688px;top:476px;width:71px;height:25px;color:#222;"><span>1.40</span></div>
<div class="t" style="left:760px;top:476px;width:57px;height:25px;color:#222;"><span>4.33</span></div>
<div class="t" style="left:818px;top:476px;width:73px;height:25px;color:#222;"><span>7.43</span></div>
<div class="t" style="left:892px;top:476px;width:38px;height:25px;color:#1a1ac4;"><span>负</span></div>
<div class="t" style="left:931px;top:476px;width:39px;height:25px;color:#c81a1a;"><span>赢</span></div>
<div class="t" style="left:971px;top:476px;width:59px;height:25px;color:#1a1ac4;"><span>小</span></div>
<div style="position:absolute;left:3px;top:501px;width:1027px;height:26px;background:#ffffff;"></div>
<div style="position:absolute;left:499px;top:502px;width:189px;height:25px;background:#fdf9f5;"></div>
<div style="position:absolute;left:688px;top:502px;width:204px;height:25px;background:#eff7fa;"></div>
<div style="position:absolute;left:4px;top:502px;width:81px;height:25px;background:#4766bb;"></div>
<div class="t" style="left:4px;top:502px;width:80px;height:25px;color:#fff;-webkit-text-stroke:0.15px #fff"><span>国际友谊</span></div>
<div class="t" style="left:85px;top:502px;width:77px;height:25px;color:#222;"><span>25-03-16</span></div>
<div class="t" style="left:163px;top:502px;width:95px;height:25px;color:#222;"><span>科威特(中)</span></div>
<div class="t" style="left:259px;top:502px;width:91px;height:25px;color:#222;"><span><span style="color:#c81a1a">1-3</span>(0-3)</span></div>
<div class="t" style="left:351px;top:502px;width:39px;height:25px;color:#222;"><span>0-0</span></div>
<div class="t" style="left:391px;top:502px;width:107px;height:25px;color:#222;"><span><span style="color:#167016">中国</span></span></div>
<div class="t" style="left:499px;top:502px;width:49px;height:25px;color:#222;"><span></span></div>
<div class="t" style="left:549px;top:502px;width:85px;height:25px;color:#222;"><span></span></div>
<div class="t" style="left:635px;top:502px;width:52px;height:25px;color:#222;"><span></span></div>
<div class="t" style="left:688px;top:502px;width:71px;height:25px;color:#222;"><span></span></div>
<div class="t" style="left:760px;top:502px;width:57px;height:25px;color:#222;"><span></span></div>
<div class="t" style="left:818px;top:502px;width:73px;height:25px;color:#222;"><span></span></div>
<div class="t" style="left:892px;top:502px;width:38px;height:25px;color:#c81a1a;"><span>胜</span></div>
<div class="t" style="left:931px;top:502px;width:39px;height:25px;color:#222;"><span></span></div>
<div class="t" style="left:971px;top:502px;width:59px;height:25px;color:#222;"><span></span></div>
<div style="position:absolute;left:3px;top:527px;width:1027px;height:26px;background:#efefef;"></div>
<div style="position:absolute;left:499px;top:528px;width:189px;height:25px;background:#fdf9f5;"></div>
<div style="position:absolute;left:688px;top:528px;width:204px;height:25px;background:#eff7fa;"></div>
<div style="position:absolute;left:4px;top:528px;width:81px;height:25px;background:#4aa53b;"></div>
<div class="t" style="left:4px;top:528px;width:80px;height:25px;color:#fff;-webkit-text-stroke:0.15px #fff"><span>亚洲预选</span></div>
<div class="t" style="left:85px;top:528px;width:77px;height:25px;color:#222;"><span>24-11-19</span></div>
<div class="t" style="left:163px;top:528px;width:95px;height:25px;color:#222;"><span><span style="color:#167016">中国</span></span></div>
<div class="t" style="left:259px;top:528px;width:91px;height:25px;color:#222;"><span><span style="color:#c81a1a">1-3</span>(0-2)</span></div>
<div class="t" style="left:351px;top:528px;width:39px;height:25px;color:#222;"><span>2-6</span></div>
<div class="t" style="left:391px;top:528px;width:107px;height:25px;color:#222;"><span>日本</span></div>
<div class="t" style="left:499px;top:528px;width:49px;height:25px;color:#222;"><span>1.00</span></div>
<div class="t" style="left:549px;top:528px;width:85px;height:25px;color:#222;"><span>受两球</span></div>
<div class="t" style="left:635px;top:528px;width:52px;height:25px;color:#222;"><span>0.86</span></div>
<div class="t" style="left:688px;top:528px;width:71px;height:25px;color:#222;"><span>15.91</span></div>
<div class="t" style="left:760px;top:528px;width:57px;height:25px;color:#222;"><span>7.39</span></div>
<div class="t" style="left:818px;top:528px;width:73px;height:25px;color:#222;"><span>1.13</span></div>
<div class="t" style="left:892px;top:528px;width:38px;height:25px;color:#1a1ac4;"><span>负</span></div>
<div class="t" style="left:931px;top:528px;width:39px;height:25px;color:#167016;"><span>走</span></div>
<div class="t" style="left:971px;top:528px;width:59px;height:25px;color:#c81a1a;"><span>大</span></div>
<div style="position:absolute;left:3px;top:553px;width:1027px;height:26px;background:#ffffff;"></div>
<div style="position:absolute;left:499px;top:554px;width:189px;height:25px;background:#fdf9f5;"></div>
<div style="position:absolute;left:688px;top:554px;width:204px;height:25px;background:#eff7fa;"></div>
<div style="position:absolute;left:4px;top:554px;width:81px;height:25px;background:#4aa53b;"></div>
<div class="t" style="left:4px;top:554px;width:80px;height:25px;color:#fff;-webkit-text-stroke:0.15px #fff"><span>亚洲预选</span></div>
<div class="t" style="left:85px;top:554px;width:77px;height:25px;color:#222;"><span>24-11-14</span></div>
<div class="t" style="left:163px;top:554px;width:95px;height:25px;color:#222;"><span>巴林</span></div>
<div class="t" style="left:259px;top:554px;width:91px;height:25px;color:#222;"><span><span style="color:#c81a1a">0-1</span>(0-0)</span></div>
<div class="t" style="left:351px;top:554px;width:39px;height:25px;color:#222;"><span>3-4</span></div>
<div class="t" style="left:391px;top:554px;width:107px;height:25px;color:#222;"><span><span style="color:#167016">中国</span></span></div>
<div class="t" style="left:499px;top:554px;width:49px;height:25px;color:#222;"><span>0.86</span></div>
<div class="t" style="left:549px;top:554px;width:85px;height:25px;color:#222;"><span>半/一</span></div>
<div class="t" style="left:635px;top:554px;width:52px;height:25px;color:#222;"><span>1.00</span></div>
<div class="t" style="left:688px;top:554px;width:71px;height:25px;color:#222;"><span>1.63</span></div>
<div class="t" style="left:760px;top:554px;width:57px;height:25px;color:#222;"><span>3.47</span></div>
<div class="t" style="left:818px;top:554px;width:73px;height:25px;color:#222;"><span>5.56</span></div>
<div class="t" style="left:892px;top:554px;width:38px;height:25px;color:#c81a1a;"><span>胜</span></div>
<div class="t" style="left:931px;top:554px;width:39px;height:25px;color:#c81a1a;"><span>赢</span></div>
<div class="t" style="left:971px;top:554px;width:59px;height:25px;color:#1a1ac4;"><span>小</span></div>
<div style="position:absolute;left:3px;top:579px;width:1027px;height:26px;background:#efefef;"></div>
<div style="position:absolute;left:499px;top:580px;width:189px;height:25px;background:#fdf9f5;"></div>
<div style="position:absolute;left:688px;top:580px;width:204px;height:25px;background:#eff7fa;"></div>
<div style="position:absolute;left:4px;top:580px;width:81px;height:25px;background:#4aa53b;"></div>
<div class="t" style="left:4px;top:580px;width:80px;height:25px;color:#fff;-webkit-text-stroke:0.15px #fff"><span>亚洲预选</span></div>
<div class="t" style="left:85px;top:580px;width:77px;height:25px;color:#222;"><span>24-10-15</span></div>
<div class="t" style="left:163px;top:580px;width:95px;height:25px;color:#222;"><span><span style="color:#167016">中国</span></span></div>
<div class="t" style="left:259px;top:580px;width:91px;height:25px;color:#222;"><span><span style="color:#c81a1a">2-1</span>(2-0)</span></div>
<div class="t" style="left:351px;top:580px;width:39px;height:25px;color:#222;"><span>1-6</span></div>
<div class="t" style="left:391px;top:580px;width:107px;height:25px;color:#222;"><span>印度尼西亚</span></div>
<div class="t" style="left:499px;top:580px;width:49px;height:25px;color:#222;"><span>1.06</span></div>
<div class="t" style="left:549px;top:580px;width:85px;height:25px;color:#222;"><span>平/半</span></div>
<div class="t" style="left:635px;top:580px;width:52px;height:25px;color:#222;"><span>0.76</span></div>
<div class="t" style="left:688px;top:580px;width:71px;height:25px;color:#222;"><span>2.52</span></div>
<div class="t" style="left:760px;top:580px;width:57px;height:25px;color:#222;"><span>3.19</span></div>
<div class="t" style="left:818px;top:580px;width:73px;height:25px;color:#222;"><span>2.73</span></div>
<div class="t" style="left:892px;top:580px;width:38px;height:25px;color:#c81a1a;"><span>胜</span></div>
<div class="t" style="left:931px;top:580px;width:39px;height:25px;color:#c81a1a;"><span>赢</span></div>
<div class="t" style="left:971px;top:580px;width:59px;height:25px;color:#c81a1a;"><span>大</span></div>
<div style="position:absolute;left:3px;top:605px;width:1027px;height:26px;background:#ffffff;"></div>
<div style="position:absolute;left:499px;top:606px;width:189px;height:25px;background:#fdf9f5;"></div>
<div style="position:absolute;left:688px;top:606px;width:204px;height:25px;background:#eff7fa;"></div>
<div style="position:absolute;left:4px;top:606px;width:81px;height:25px;background:#4aa53b;"></div>
<div class="t" style="left:4px;top:606px;width:80px;height:25px;color:#fff;-webkit-text-stroke:0.15px #fff"><span>亚洲预选</span></div>
<div class="t" style="left:85px;top:606px;width:77px;height:25px;color:#222;"><span>24-10-10</span></div>
<div class="t" style="left:163px;top:606px;width:95px;height:25px;color:#222;"><span>澳大利亚</span></div>
<div class="t" style="left:259px;top:606px;width:91px;height:25px;color:#222;"><span><span style="color:#c81a1a">3-1</span>(1-1)</span></div>
<div class="t" style="left:351px;top:606px;width:39px;height:25px;color:#222;"><span>3-3</span></div>
<div class="t" style="left:391px;top:606px;width:107px;height:25px;color:#222;"><span><span style="color:#167016">中国</span></span></div>
<div class="t" style="left:499px;top:606px;width:49px;height:25px;color:#222;"><span>1.03</span></div>
<div class="t" style="left:549px;top:606px;width:85px;height:25px;color:#222;"><span>两球</span></div>
<div class="t" style="left:635px;top:606px;width:52px;height:25px;color:#222;"><span>0.79</span></div>
<div class="t" style="left:688px;top:606px;width:71px;height:25px;color:#222;"><span>1.15</span></div>
<div class="t" style="left:760px;top:606px;width:57px;height:25px;color:#222;"><span>6.67</span></div>
<div class="t" style="left:818px;top:606px;width:73px;height:25px;color:#222;"><span>16.06</span></div>
<div class="t" style="left:892px;top:606px;width:38px;height:25px;color:#1a1ac4;"><span>负</span></div>
<div class="t" style="left:931px;top:606px;width:39px;height:25px;color:#167016;"><span>走</span></div>
<div class="t" style="left:971px;top:606px;width:59px;height:25px;color:#c81a1a;"><span>大</span></div>
<div style="position:absolute;left:3px;top:631px;width:1027px;height:26px;background:#efefef;"></div>
<div style="position:absolute;left:499px;top:632px;width:189px;height:25px;background:#fdf9f5;"></div>
<div style="position:absolute;left:688px;top:632px;width:204px;height:25px;background:#eff7fa;"></div>
<div style="position:absolute;left:4px;top:632px;width:81px;height:25px;background:#4aa53b;"></div>
<div class="t" style="left:4px;top:632px;width:80px;height:25px;color:#fff;-webkit-text-stroke:0.15px #fff"><span>亚洲预选</span></div>
<div class="t" style="left:85px;top:632px;width:77px;height:25px;color:#222;"><span>24-09-10</span></div>
<div class="t" style="left:163px;top:632px;width:95px;height:25px;color:#222;"><span><span style="color:#167016">中国</span></span></div>
<div class="t" style="left:259px;top:632px;width:91px;height:25px;color:#222;"><span><span style="color:#c81a1a">1-2</span>(1-1)</span></div>
<div class="t" style="left:351px;top:632px;width:39px;height:25px;color:#222;"><span>6-5</span></div>
<div class="t" style="left:391px;top:632px;width:107px;height:25px;color:#222;"><span>沙特阿拉伯<span class="bd">1</span></span></div>
<div class="t" style="left:499px;top:632px;width:49px;height:25px;color:#222;"><span>0.82</span></div>
<div class="t" style="left:549px;top:632px;width:85px;height:25px;color:#222;"><span>受一球</span></div>
<div class="t" style="left:635px;top:632px;width:52px;height:25px;color:#222;"><span>1.00</span></div>
<div class="t" style="left:688px;top:632px;width:71px;height:25px;color:#222;"><span>7.07</span></div>
<div class="t" style="left:760px;top:632px;width:57px;height:25px;color:#222;"><span>3.98</span></div>
<div class="t" style="left:818px;top:632px;width:73px;height:25px;color:#222;"><span>1.45</span></div>
<div class="t" style="left:892px;top:632px;width:38px;height:25px;color:#1a1ac4;"><span>负</span></div>
<div class="t" style="left:931px;top:632px;width:39px;height:25px;color:#167016;"><span>走</span></div>
<div class="t" style="left:971px;top:632px;width:59px;height:25px;color:#c81a1a;"><span>大</span></div>
<div style="position:absolute;left:3px;top:657px;width:1027px;height:26px;background:#ffffff;"></div>
<div style="position:absolute;left:499px;top:658px;width:189px;height:25px;background:#fdf9f5;"></div>
<div style="position:absolute;left:688px;top:658px;width:204px;height:25px;background:#eff7fa;"></div>
<div style="position:absolute;left:4px;top:658px;width:81px;height:25px;background:#4aa53b;"></div>
<div class="t" style="left:4px;top:658px;width:80px;height:25px;color:#fff;-webkit-text-stroke:0.15px #fff"><span>亚洲预选</span></div>
<div class="t" style="left:85px;top:658px;width:77px;height:25px;color:#222;"><span>24-09-05</span></div>
<div class="t" style="left:163px;top:658px;width:95px;height:25px;color:#222;"><span>日本</span></div>
<div class="t" style="left:259px;top:658px;width:91px;height:25px;color:#222;"><span><span style="color:#c81a1a">7-0</span>(2-0)</span></div>
<div class="t" style="left:351px;top:658px;width:39px;height:25px;color:#222;"><span>5-2</span></div>
<div class="t" style="left:391px;top:658px;width:107px;height:25px;color:#222;"><span><span style="color:#167016">中国</span></span></div>
<div class="t" style="left:499px;top:658px;width:49px;height:25px;color:#222;"><span>0.96</span></div>
<div class="t" style="left:549px;top:658px;width:85px;height:25px;color:#222;"><span>两球半</span></div>
<div class="t" style="left:635px;top:658px;width:52px;height:25px;color:#222;"><span>0.86</span></div>
<div class="t" style="left:688px;top:658px;width:71px;height:25px;color:#222;"><span>1.07</span></div>
<div class="t" style="left:760px;top:658px;width:57px;height:25px;color:#222;"><span>9.60</span></div>
<div class="t" style="left:818px;top:658px;width:73px;height:25px;color:#222;"><span>24.77</span></div>
<div class="t" style="left:892px;top:658px;width:38px;height:25px;color:#1a1ac4;"><span>负</span></div>
<div class="t" style="left:931px;top:658px;width:39px;height:25px;color:#1a1ac4;"><span>输</span></div>
<div class="t" style="left:971px;top:658px;width:59px;height:25px;color:#c81a1a;"><span>大</span></div>
<div style="position:absolute;left:3px;top:683px;width:1027px;height:26px;background:#efefef;"></div>
<div style="position:absolute;left:499px;top:684px;width:189px;height:25px;background:#fdf9f5;"></div>
<div style="position:absolute;left:688px;top:684px;width:204px;height:25px;background:#eff7fa;"></div>
<div style="position:absolute;left:4px;top:684px;width:81px;height:25px;background:#4aa53b;"></div>
<div class="t" style="left:4px;top:684px;width:80px;height:25px;color:#fff;-webkit-text-stroke:0.15px #fff"><span>亚洲预选</span></div>
<div class="t" style="left:85px;top:684px;width:77px;height:25px;color:#222;"><span>24-06-11</span></div>
<div class="t" style="left:163px;top:684px;width:95px;height:25px;color:#222;"><span>韩国</span></div>
<div class="t" style="left:259px;top:684px;width:91px;height:25px;color:#222;"><span><span style="color:#c81a1a">1-0</span>(0-0)</span></div>
<div class="t" style="left:351px;top:684px;width:39px;height:25px;color:#222;"><span>11-1</span></div>
<div class="t" style="left:391px;top:684px;width:107px;height:25px;color:#222;"><span><span style="color:#167016">中国</span></span></div>
<div class="t" style="left:499px;top:684px;width:49px;height:25px;color:#222;"><span>0.94</span></div>
<div class="t" style="left:549px;top:684px;width:85px;height:25px;color:#222;"><span>球半/两</span></div>
<div class="t" style="left:635px;top:684px;width:52px;height:25px;color:#222;"><span>0.88</span></div>
<div class="t" style="left:688px;top:684px;width:71px;height:25px;color:#222;"><span>1.21</span></div>
<div class="t" style="left:760px;top:684px;width:57px;height:25px;color:#222;"><span>5.91</span></div>
<div class="t" style="left:818px;top:684px;width:73px;height:25px;color:#222;"><span>10.94</span></div>
<div class="t" style="left:892px;top:684px;width:38px;height:25px;color:#1a1ac4;"><span>负</span></div>
<div class="t" style="left:931px;top:684px;width:39px;height:25px;color:#c81a1a;"><span>赢</span></div>
<div class="t" style="left:971px;top:684px;width:59px;height:25px;color:#1a1ac4;"><span>小</span></div>
<div style="position:absolute;left:3px;top:709px;width:1027px;height:26px;background:#fff;"></div>
<div class="t" style="left:4px;top:710px;width:1026px;height:25px;color:#222;letter-spacing:0.2px"><span>近<span style="color:#c81a1a">10</span>场,胜3平0负7, 胜率:<span style="color:#c81a1a">30%</span> 让胜率:<span style="color:#c81a1a">44.4%</span> 大率:<span style="color:#c81a1a">55.6%</span> 单率:<span style="color:#c81a1a">60%</span></span></div>
<div style="position:absolute;left:3px;top:410px;width:1028px;height:1px;background:#bdbdbd;"></div>
<div style="position:absolute;left:498px;top:430px;width:533px;height:1px;background:#bdbdbd;"></div>
<div style="position:absolute;left:84px;top:449px;width:947px;height:1px;background:#bdbdbd;"></div>
<div style="position:absolute;left:4px;top:449px;width:80px;height:1px;background:#a4d29d;"></div>
<div style="position:absolute;left:84px;top:475px;width:947px;height:1px;background:#bdbdbd;"></div>
<div style="position:absolute;left:4px;top:475px;width:80px;height:1px;background:#a4d29d;"></div>
<div style="position:absolute;left:84px;top:501px;width:947px;height:1px;background:#bdbdbd;"></div>
<div style="position:absolute;left:4px;top:501px;width:80px;height:1px;background:#a4c2bd;"></div>
<div style="position:absolute;left:84px;top:527px;width:947px;height:1px;background:#bdbdbd;"></div>
<div style="position:absolute;left:4px;top:527px;width:80px;height:1px;background:#a4c2bd;"></div>
<div style="position:absolute;left:84px;top:553px;width:947px;height:1px;background:#bdbdbd;"></div>
<div style="position:absolute;left:4px;top:553px;width:80px;height:1px;background:#a4d29d;"></div>
<div style="position:absolute;left:84px;top:579px;width:947px;height:1px;background:#bdbdbd;"></div>
<div style="position:absolute;left:4px;top:579px;width:80px;height:1px;background:#a4d29d;"></div>
<div style="position:absolute;left:84px;top:605px;width:947px;height:1px;background:#bdbdbd;"></div>
<div style="position:absolute;left:4px;top:605px;width:80px;height:1px;background:#a4d29d;"></div>
<div style="position:absolute;left:84px;top:631px;width:947px;height:1px;background:#bdbdbd;"></div>
<div style="position:absolute;left:4px;top:631px;width:80px;height:1px;background:#a4d29d;"></div>
<div style="position:absolute;left:84px;top:657px;width:947px;height:1px;background:#bdbdbd;"></div>
<div style="position:absolute;left:4px;top:657px;width:80px;height:1px;background:#a4d29d;"></div>
<div style="position:absolute;left:84px;top:683px;width:947px;height:1px;background:#bdbdbd;"></div>
<div style="position:absolute;left:4px;top:683px;width:80px;height:1px;background:#a4d29d;"></div>
<div style="position:absolute;left:84px;top:709px;width:947px;height:1px;background:#bdbdbd;"></div>
<div style="position:absolute;left:4px;top:709px;width:80px;height:1px;background:#a4d29d;"></div>
<div style="position:absolute;left:3px;top:735px;width:1028px;height:1px;background:#bdbdbd;"></div>
<div style="position:absolute;left:3px;top:410px;width:1px;height:39px;background:#bdbdbd;"></div>
<div style="position:absolute;left:3px;top:449px;width:1px;height:261px;background:rgba(0,0,0,0.2);"></div>
<div style="position:absolute;left:3px;top:710px;width:1px;height:26px;background:#bdbdbd;"></div>
<div style="position:absolute;left:84px;top:410px;width:1px;height:39px;background:#bdbdbd;"></div>
<div style="position:absolute;left:84px;top:449px;width:1px;height:261px;background:rgba(0,0,0,0.2);"></div>
<div style="position:absolute;left:1030px;top:410px;width:1px;height:326px;background:#bdbdbd;"></div>
<div style="position:absolute;left:162px;top:410px;width:1px;height:300px;background:#bdbdbd;"></div>
<div style="position:absolute;left:258px;top:410px;width:1px;height:300px;background:#bdbdbd;"></div>
<div style="position:absolute;left:350px;top:410px;width:1px;height:300px;background:#bdbdbd;"></div>
<div style="position:absolute;left:390px;top:410px;width:1px;height:300px;background:#bdbdbd;"></div>
<div style="position:absolute;left:498px;top:410px;width:1px;height:300px;background:#bdbdbd;"></div>
<div style="position:absolute;left:548px;top:430px;width:1px;height:280px;background:#bdbdbd;"></div>
<div style="position:absolute;left:634px;top:430px;width:1px;height:280px;background:#bdbdbd;"></div>
<div style="position:absolute;left:687px;top:410px;width:1px;height:300px;background:#bdbdbd;"></div>
<div style="position:absolute;left:759px;top:430px;width:1px;height:280px;background:#bdbdbd;"></div>
<div style="position:absolute;left:817px;top:430px;width:1px;height:280px;background:#bdbdbd;"></div>
<div style="position:absolute;left:891px;top:410px;width:1px;height:300px;background:#bdbdbd;"></div>
<div style="position:absolute;left:930px;top:430px;width:1px;height:280px;background:#bdbdbd;"></div>
<div style="position:absolute;left:970px;top:430px;width:1px;height:280px;background:#bdbdbd;"></div>
</body></html>
